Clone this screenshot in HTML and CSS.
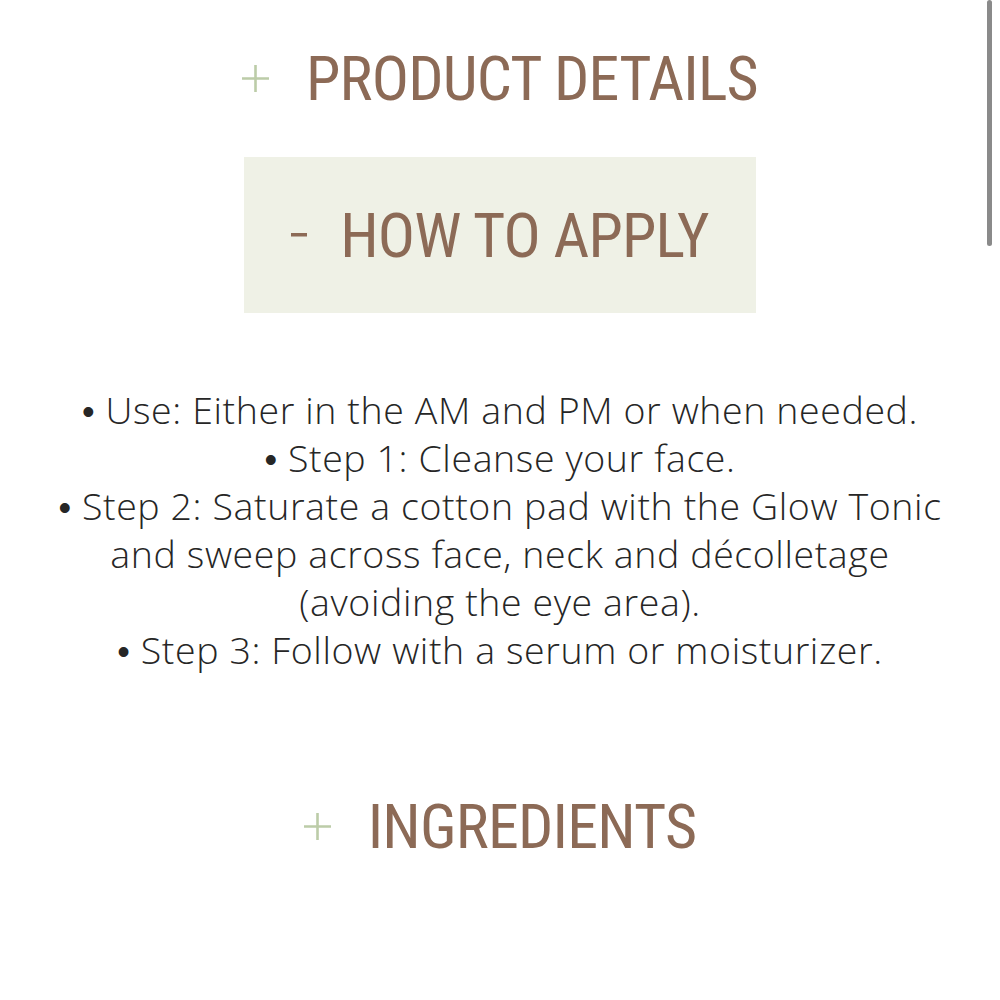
FILE: index.html
```html
<!DOCTYPE html>
<html lang="en">
<head>
  <meta charset="UTF-8">
  <meta name="viewport" content="width=device-width, initial-scale=1.0">
  <title>How to Apply - Glow Tonic</title>
  <link rel="stylesheet" href="styles.css">
</head>
<body>

  <div class="accordion">
    <div class="acc-item">
      <button class="acc-head">
        <svg class="acc-sign" width="27" height="27" viewBox="0 0 27 27"><path d="M13.5 0v27M0 13.5h27"/></svg>
        <span class="acc-title">PRODUCT DETAILS</span>
      </button>
    </div>

    <div class="acc-item open">
      <button class="acc-head">
        <svg class="acc-sign minus" width="16" height="4" viewBox="0 0 16 4"><rect width="16" height="3.5"/></svg>
        <span class="acc-title">HOW TO APPLY</span>
      </button>
      <div class="acc-body">
        <p><span class="dot">•</span> Use: Either in the AM and PM or when needed.</p>
        <p><span class="dot">•</span> Step 1: Cleanse your face.</p>
        <p><span class="dot">•</span> Step 2: Saturate a cotton pad with the Glow Tonic and sweep across face, neck and décolletage (avoiding the eye area).</p>
        <p><span class="dot">•</span> Step 3: Follow with a serum or moisturizer.</p>
      </div>
    </div>

    <div class="acc-item">
      <button class="acc-head">
        <svg class="acc-sign" width="27" height="27" viewBox="0 0 27 27"><path d="M13.5 0v27M0 13.5h27"/></svg>
        <span class="acc-title">INGREDIENTS</span>
      </button>
    </div>
  </div>

  <div class="scroll-thumb"></div>

</body>
</html>
```

FILE: styles.css
```css
* {
  margin: 0;
  padding: 0;
  box-sizing: border-box;
}

body {
  font-family: 'Open Sans', 'Liberation Sans', sans-serif;
  background: #fff;
  color: #333;
  width: 1000px;
  height: 1000px;
  overflow: hidden;
}

.accordion {
  display: flex;
  flex-direction: column;
  align-items: center;
  padding-top: 35px;
}

.acc-item {
  display: flex;
  flex-direction: column;
  align-items: center;
  width: 100%;
}

.acc-item + .acc-item {
  margin-top: 36px;
}

.acc-head {
  display: flex;
  align-items: center;
  justify-content: center;
  gap: 37px;
  width: 512px;
  height: 86px;
  white-space: nowrap;
  background: none;
  border: none;
  cursor: pointer;
  font-family: 'Roboto Condensed', 'Liberation Sans Narrow', 'Liberation Sans', sans-serif;
  color: #8c6a56;
}

.acc-item.open .acc-head {
  height: 156px;
  gap: 33px;
  background-color: #eff1e6;
}

.acc-sign {
  flex-shrink: 0;
  stroke: #bccca8;
  stroke-width: 2.6;
  fill: none;
}

.acc-sign.minus {
  stroke: none;
  fill: #8c6a56;
}

.acc-title {
  font-size: 62px;
  font-weight: 400;
  letter-spacing: -0.8px;
}

.acc-body {
  width: 900px;
  padding: 73px 0;
  text-align: center;
  font-size: 37.5px;
  font-weight: 300;
  letter-spacing: 0.6px;
  line-height: 48px;
  color: #262626;
}

.acc-body .dot {
  font-family: 'DejaVu Sans', sans-serif;
  font-size: 36px;
  line-height: 0;
}

.scroll-thumb {
  position: absolute;
  top: 0;
  right: 8px;
  width: 5px;
  height: 246px;
  border-radius: 3px;
  background-color: #8a8a8a;
}
```
